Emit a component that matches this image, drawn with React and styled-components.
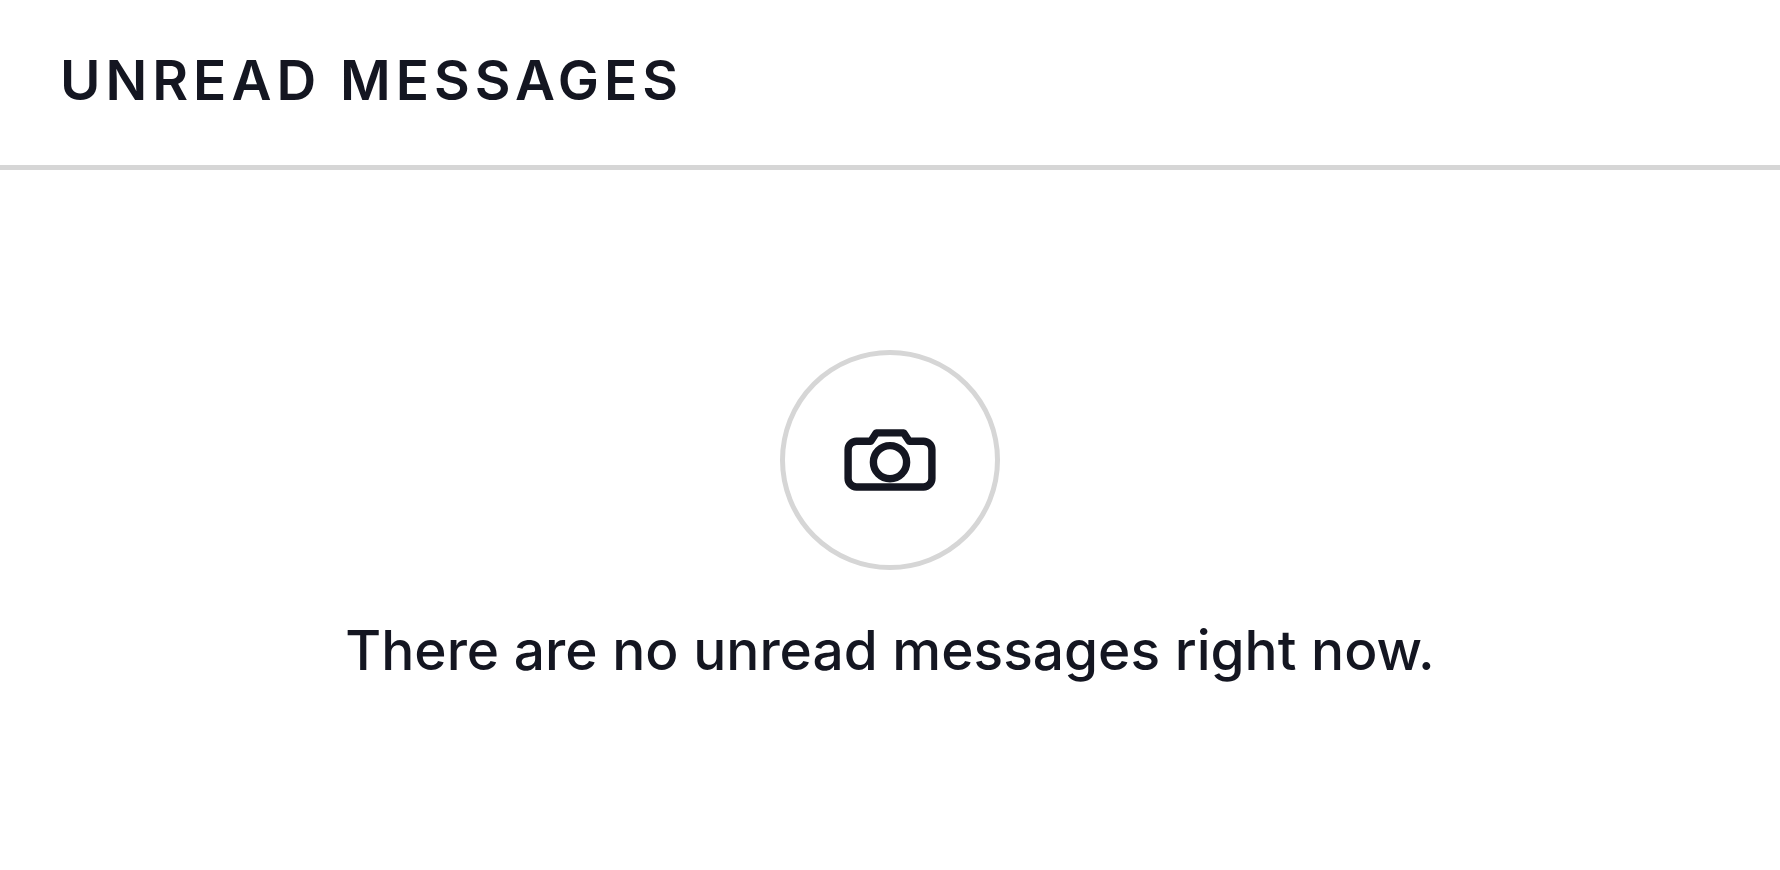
import styled, { createGlobalStyle } from "styled-components";

const GlobalStyle = createGlobalStyle`
  *,
  *::before,
  *::after {
    box-sizing: border-box;
  }
  body {
    margin: 0;
    background-color: #fff;
    color: #141621;
    font-family: Inter, "Liberation Sans", sans-serif;
    font-size: 55px;
    line-height: 70px;
  }
`;

const CameraIcon = () => (
  <svg
    xmlns="http://www.w3.org/2000/svg"
    viewBox="0 0 100 100"
    width="100"
    height="100"
    fill="none"
    stroke="currentColor"
    strokeWidth="7.4"
    aria-hidden="true"
  >
    <path
      strokeLinejoin="round"
      d="M16.5 31.2H30.8L36.3 22.9H63.7L69.2 31.2H83.5A8.6 8.6 0 0 1 91.9 39.6V68.4A8.6 8.6 0 0 1 83.5 77H16.5A8.6 8.6 0 0 1 8.1 68.4V39.6A8.6 8.6 0 0 1 16.5 31.2Z"
    />
    <circle cx="50" cy="52.2" r="16.6" />
  </svg>
);

export default function App() {
  return (
    <>
      <GlobalStyle />
      <Panel>
        <Header>
          <Title>Unread messages</Title>
        </Header>
        <Empty>
          <IconCircle>
            <CameraIcon />
          </IconCircle>
          <Message>There are no unread messages right now.</Message>
        </Empty>
      </Panel>
    </>
  );
}

const Panel = styled.main`
  display: flex;
  flex-direction: column;
  min-height: 100vh;
`;

const Header = styled.header`
  padding: 45px 60px 50px;
  border-bottom: 5px solid #d6d6d6;
`;

const Title = styled.h1`
  margin: 0;
  font-size: inherit;
  font-weight: 600;
  letter-spacing: 5px;
  text-transform: uppercase;
`;

const Empty = styled.section`
  display: flex;
  flex-direction: column;
  align-items: center;
  gap: 45px;
  padding: 180px 60px;
`;

const IconCircle = styled.div`
  display: flex;
  align-items: center;
  justify-content: center;
  width: 220px;
  height: 220px;
  border: 5px solid #d6d6d6;
  border-radius: 50%;
`;

const Message = styled.p`
  margin: 0;
  font-weight: 500;
  text-align: center;
`;
